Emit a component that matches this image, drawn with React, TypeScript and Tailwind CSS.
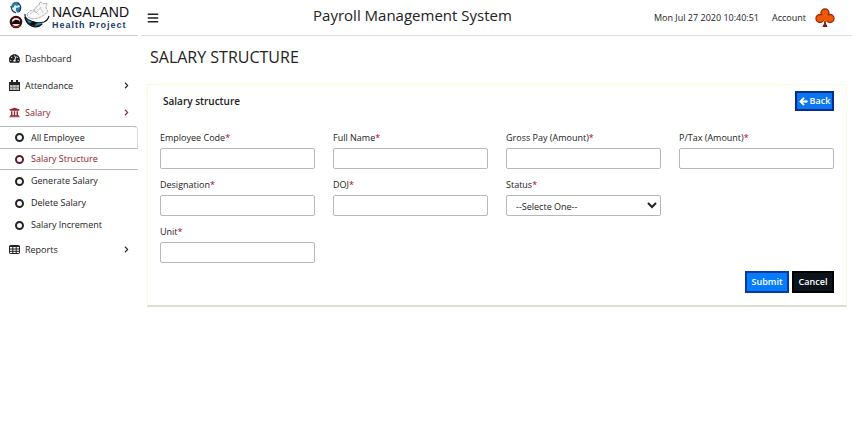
import { FaTachometerAlt, FaUniversity, FaArrowLeft, FaChevronRight, FaBars } from "react-icons/fa";
import type { ReactNode } from "react";

function ProjectLogo() {
  return (
    <svg viewBox="0 0 42 32" className="h-8 w-[42px] shrink-0" aria-hidden="true">
      <circle cx="8" cy="8" r="5" fill="#e4f1f8" />
      <path d="M4 4q2-3 6-2l2 2-3 2-2-1-2 3-2-1zM8 8l4-1 1 3-3 3-2-2z" fill="#2b7ca5" />
      <path d="M3 6q0 5 5 7M10 3q5 4 1 9" fill="none" stroke="#123f5e" strokeWidth="1.2" />
      <circle cx="8" cy="22" r="5.2" fill="#f3e4e4" stroke="#3c0c0e" strokeWidth="2.2" />
      <path d="M4 23q0-2 2-2 1-2 3-1 3 0 3 3v1H4z" fill="#16090a" />
      <path d="M4 26q4 2 8 0" fill="none" stroke="#a8242a" strokeWidth="1.2" />
      <path d="M19 14l3-3 4-1 2-3 3-2 1-3 4 2 3-1-1 5 2 4-4 3-5 3-6 1-5-2z" fill="#f8f8f8" stroke="#999" strokeWidth=".8" strokeDasharray="3 .7" />
      <path d="M22 14l4-3 2 2 5-6M26 10l5 5M32 7l3 6" fill="none" stroke="#b5b5b5" strokeWidth=".7" />
      <path d="M17 14q-1 4 6 7 6 3 12 2-3 4-9 3-9-3-9-12z" fill="#2387b4" />
      <path d="M17 14q-1 4 6 7 6 3 13 1 4-2 5-6" fill="none" stroke="#111b22" strokeWidth="1.1" />
      <path d="M17 17q1 6 7 9 6 2 10-2" fill="none" stroke="#101820" strokeWidth="1.6" />
      <path d="M21 24l4-3 4 2-3 3z" fill="#111" />
    </svg>
  );
}

function Club() {
  return (
    <svg viewBox="0 0 20 20" className="size-5" aria-hidden="true">
      <g fill="#ee5a08" stroke="#a32a0a" strokeWidth="1.4">
        <circle cx="10" cy="5" r="4" />
        <circle cx="5" cy="10.5" r="4" />
        <circle cx="15" cy="10.5" r="4" />
      </g>
      <path d="M7 7h6l2 4-5 2-5-2z" fill="#ee5a08" />
      <path d="M10 13q0 3 2 5.500H8q2-2.500 2-5.500z" fill="#7c1508" stroke="#7c1508" />
    </svg>
  );
}

function CalendarIcon() {
  return (
    <svg viewBox="0 0 11 11" className="size-[11px]" fill="currentColor" aria-hidden="true">
      <path d="M2 0h2v3H2zM7 0h2v3H7z" />
      <path d="M0 2h11v9H0zM1 5v5h9V5z" fillRule="evenodd" />
      <path d="M1 7h9v.6H1zM3.500 5h.6v5h-.6zM6.800 5h.6v5h-.6z" opacity=".6" />
      <path d="M1 5h9v5H1z" opacity=".3" />
    </svg>
  );
}

function TableIcon() {
  return (
    <svg viewBox="0 0 11 11" className="size-[11px]" fill="none" stroke="currentColor" aria-hidden="true">
      <rect x=".5" y="1.500" width="10" height="8" rx=".7" />
      <path d="M.5 2.500h10M.5 5h10M.5 7.300h10M3.800 2v8M7.200 2v8" />
    </svg>
  );
}

function NavItem({ icon, label, expandable, active }: { icon: ReactNode; label: string; expandable?: boolean; active?: boolean }) {
  return (
    <a href="#" className={`flex h-[27px] items-center gap-[5px] pr-2 pl-[9px] ${active ? "text-[#94202b]" : "text-[#222]"}`}>
      <span className="text-[11px]">{icon}</span>
      <span className="flex-1">{label}</span>
      {expandable && <FaChevronRight className="size-[7px]" />}
    </a>
  );
}

const salaryLinks = ["All Employee", "Salary Structure", "Generate Salary", "Delete Salary", "Salary Increment"];

function Sidebar() {
  return (
    <nav className="w-[138px] shrink-0 pt-[9px]">
      <NavItem icon={<FaTachometerAlt />} label="Dashboard" />
      <NavItem icon={<CalendarIcon />} label="Attendance" expandable />
      <NavItem icon={<FaUniversity />} label="Salary" expandable active />
      <ul>
        {salaryLinks.map((label) => {
          const active = label === "Salary Structure";
          return (
            <li key={label}>
              <a
                href="#"
                className={`flex h-[22px] items-center gap-[7px] pl-[15px] ${active ? "border-y border-[#bbb] text-[#94202b]" : "text-[#222]"} ${label === "All Employee" ? "rounded-tr-sm border-t border-r border-t-[#bbb] border-r-[#ddd]" : ""}`}
              >
                <span className={`size-[9px] rounded-full border-2 ${active ? "border-[#5c1c2c]" : "border-[#222]"}`} />
                {label}
              </a>
            </li>
          );
        })}
      </ul>
      <NavItem icon={<TableIcon />} label="Reports" expandable />
    </nav>
  );
}

function Label({ id, text }: { id: string; text: string }) {
  return (
    <label htmlFor={id} className="mb-[3px] block leading-[15px]">
      {text}
      <span className="text-[#b00010]">*</span>
    </label>
  );
}

const control = "block h-[21px] w-full rounded-xs border border-[#b8b8b8] bg-white";

function Field({ id, text }: { id: string; text: string }) {
  return (
    <div>
      <Label id={id} text={text} />
      <input id={id} type="text" className={`${control} px-2`} />
    </div>
  );
}

export default function App() {
  return (
    <div className="min-h-screen bg-white font-['Open_Sans','Noto_Sans',sans-serif] text-[9px] text-[#222]">
      <header className="flex h-9">
        <a href="#" className="flex w-[138px] shrink-0 items-start gap-[2px] border-b border-[#ccc] pl-2">
          <ProjectLogo />
          <span className="pt-1 font-['Liberation_Sans',Arial,sans-serif] whitespace-nowrap">
            <span className="block text-sm leading-4 text-[#111]">NAGALAND</span>
            <span className="block text-[9px] leading-[10px] font-bold tracking-[1px] text-[#1b3c6c]">Health Project</span>
          </span>
        </a>
        <div className="ml-[3px] flex flex-1 items-center border-b border-[#ddd] pr-[17px] pl-[6px]">
          <button type="button" aria-label="Toggle menu">
            <FaBars className="size-3" />
          </button>
          <h1 className="flex-1 pb-1 pl-3 text-center text-[15px]">Payroll Management System</h1>
          <time>Mon Jul 27 2020 10:40:51</time>
          <a href="#" className="ml-[13px] flex items-center gap-[9px]">
            Account
            <Club />
          </a>
        </div>
      </header>
      <div className="flex">
        <Sidebar />
        <main className="min-w-0 flex-1 pr-[5px] pl-[9px]">
          <h2 className="pt-[9px] pl-[3px] text-base leading-6">SALARY STRUCTURE</h2>
          <section className="mt-[15px] border border-b-2 border-[#fbfbdc] border-b-[#deded0] px-3 pb-3">
            <div className="flex items-center justify-between pt-[6px] pl-[3px]">
              <h3 className="text-[10px] font-semibold">Salary structure</h3>
              <button type="button" className="flex h-5 w-[39px] items-center justify-center gap-[2px] border-2 border-[#062c91] bg-[#0b76ed] font-semibold text-white">
                <FaArrowLeft className="size-[9px]" stroke="currentColor" strokeWidth={40} />
                Back
              </button>
            </div>
            <form onSubmit={(e) => e.preventDefault()}>
              <div className="mt-[19px] grid grid-cols-4 gap-x-[18px] gap-y-2">
                <Field id="code" text="Employee Code" />
                <Field id="name" text="Full Name" />
                <Field id="gross" text="Gross Pay (Amount)" />
                <Field id="tax" text="P/Tax (Amount)" />
                <Field id="designation" text="Designation" />
                <Field id="doj" text="DOJ" />
                <div>
                  <Label id="status" text="Status" />
                  <select id="status" className={`${control} pt-px pl-[5px]`}>
                    <option>--Selecte One--</option>
                  </select>
                </div>
                <div className="col-start-1">
                  <Field id="unit" text="Unit" />
                </div>
              </div>
              <div className="mt-2 flex justify-end gap-[3px]">
                <button type="submit" className="h-[22px] w-11 border-2 border-[#053a9f] bg-[#077cfb] font-semibold text-white">Submit</button>
                <button type="button" className="h-[22px] w-[42px] border-2 border-black bg-[#0c131a] font-semibold text-white">Cancel</button>
              </div>
            </form>
          </section>
        </main>
      </div>
    </div>
  );
}
